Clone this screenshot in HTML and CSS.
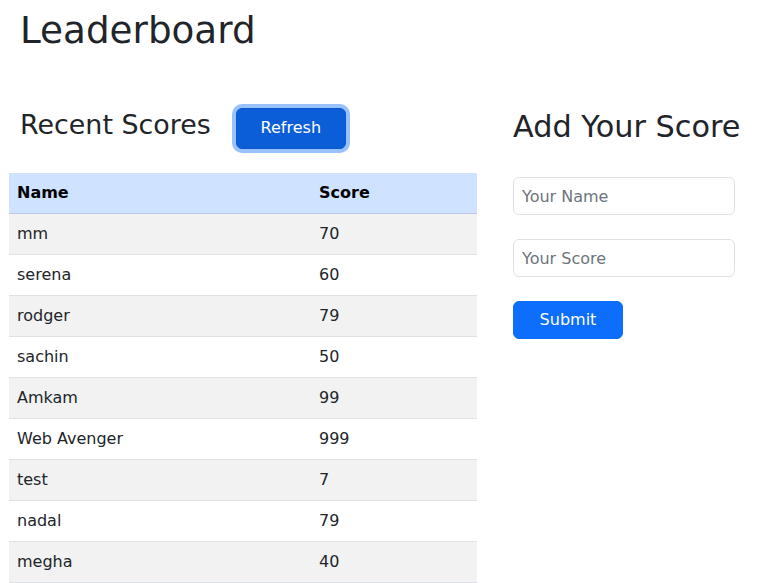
FILE: index.html
```html
<!DOCTYPE html>
<html lang="en">
<head>
<meta charset="utf-8">
<title>Leaderboard</title>
<link rel="stylesheet" href="styles.css">
</head>
<body>
<div class="page">
  <h1 class="title">Leaderboard</h1>
  <div class="columns">
    <section class="left">
      <div class="scores-head">
        <h3 class="sub">Recent Scores</h3>
        <button class="btn btn-refresh" type="button">Refresh</button>
      </div>
      <table class="board">
        <thead>
          <tr><th class="c-name">Name</th><th>Score</th></tr>
        </thead>
        <tbody>
          <tr><td>mm</td><td>70</td></tr>
          <tr><td>serena</td><td>60</td></tr>
          <tr><td>rodger</td><td>79</td></tr>
          <tr><td>sachin</td><td>50</td></tr>
          <tr><td>Amkam</td><td>99</td></tr>
          <tr><td>Web Avenger</td><td>999</td></tr>
          <tr><td>test</td><td>7</td></tr>
          <tr><td>nadal</td><td>79</td></tr>
          <tr><td>megha</td><td>40</td></tr>
        </tbody>
      </table>
    </section>
    <section class="right">
      <h2 class="add">Add Your Score</h2>
      <form class="form">
        <input class="field" type="text" placeholder="Your Name">
        <input class="field" type="text" placeholder="Your Score">
        <button class="btn btn-submit" type="button">Submit</button>
      </form>
    </section>
  </div>
</div>
</body>
</html>
```
FILE: styles.css
```css
* { box-sizing: border-box; }
html, body { margin: 0; padding: 0; background: #fff; }
body {
  font-family: "DejaVu Sans", sans-serif;
  font-size: 16px;
  line-height: 24px;
  color: #212529;
}
.page { padding: 8px 0 0 9px; }
.title {
  margin: 0 0 0 11px;
  font-size: 37.3px;
  font-weight: 400;
  line-height: 1.2;
}
.columns {
  display: flex;
  align-items: flex-start;
  margin-top: 56px;
}
.left { width: 468px; flex: none; }
.right { margin-left: 36px; width: 222px; flex: none; }
.scores-head {
  display: flex;
  align-items: stretch;
  margin-bottom: 24px;
  padding-left: 11px;
}
.sub {
  margin: 0 0 8px 0;
  font-size: 26.9px;
  font-weight: 400;
  line-height: 1.2;
  white-space: nowrap;
}
.btn {
  font-family: inherit;
  font-size: 16px;
  line-height: 24px;
  color: #fff;
  border: 1px solid transparent;
  border-radius: 6px;
  width: 110px;
  padding: 0;
  cursor: pointer;
}
.btn-refresh {
  margin-left: 25px;
  margin-top: -1px;
  height: 41px;
  background: #0b5ed7;
  border-color: #0a58ca;
  box-shadow: 0 0 0 4px #98c1fe;
}
.btn-submit {
  height: 38px;
  background: #0d6efd;
  border-color: #0d6efd;
}
.board {
  width: 468px;
  border-collapse: collapse;
}
.board th, .board td {
  padding: 8px;
  text-align: left;
  border-bottom: 1px solid #dee2e6;
  line-height: 24px;
}
.board th { font-weight: 700; color: #000; }
.c-name { width: 302px; }
.board thead tr { background: #cfe2ff; }
.board thead th { border-bottom-color: #b9cbe6; }
.board tbody tr:nth-child(odd) { background: #f2f2f2; }
.add {
  margin: 0;
  font-size: 30.3px;
  font-weight: 400;
  line-height: 1.2;
  white-space: nowrap;
}
.form {
  display: flex;
  flex-direction: column;
  align-items: flex-start;
  gap: 24px;
  margin-top: 32px;
}
.field {
  display: block;
  width: 222px;
  height: 38px;
  padding: 6px 8px;
  font-family: inherit;
  font-size: 16px;
  line-height: 24px;
  color: #212529;
  border: 1px solid #dee2e6;
  border-radius: 6px;
  background: #fff;
}
.field::placeholder { color: #6c757d; }
```
